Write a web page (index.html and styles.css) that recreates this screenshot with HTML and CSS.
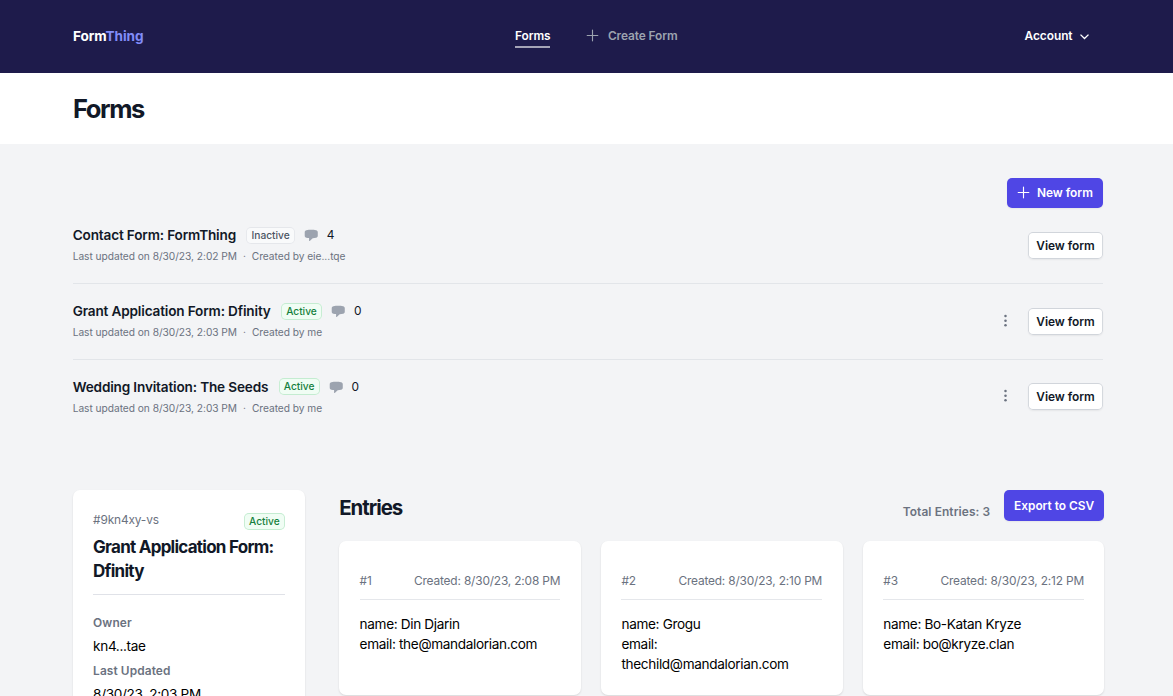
FILE: index.html
```html
<!DOCTYPE html>
<html lang="en">
<head>
<meta charset="utf-8">
<title>FormThing</title>
<link rel="stylesheet" href="styles.css">
</head>
<body>
<header class="topbar">
  <div class="logo">Form<span>Thing</span></div>
  <nav class="nav">
    <a class="nav-link active">Forms</a>
    <a class="nav-link"><svg class="icon" viewBox="0 0 24 24"><path d="M12 4.5v15m7.5-7.5h-15"/></svg>Create Form</a>
  </nav>
  <div class="account">Account<svg class="chevron" viewBox="0 0 20 20"><path d="M5.3 7.8 10 12.4l4.7-4.6"/></svg></div>
</header>
<div class="page-head"><h1>Forms</h1></div>
<main>
  <section class="forms">
    <div class="toolbar"><button class="btn primary"><svg class="icon" viewBox="0 0 24 24"><path d="M12 4.5v15m7.5-7.5h-15"/></svg>New form</button></div>
    <ul class="list">
      <li class="row">
        <div>
          <div class="row-title"><h2>Contact Form: FormThing</h2><span class="badge inactive">Inactive</span><svg class="chat" viewBox="0 0 20 20"><path d="M10 2.5c-2.3 0-4.5.2-6.7.5C1.9 3.2 1 4.4 1 5.8v4.9c0 1.4.9 2.6 2.3 2.8 1.2.2 2.5.3 3.7.4v3.3c0 .7.8 1 1.3.5l3.7-3.7c1.6 0 3.2-.2 4.7-.5 1.4-.2 2.3-1.4 2.3-2.8V5.8c0-1.4-.9-2.6-2.3-2.8-2.2-.3-4.4-.5-6.7-.5Z"/></svg><span class="count">4</span></div>
          <p class="meta">Last updated on 8/30/23, 2:02 PM<i>·</i>Created by eie...tqe</p>
        </div>
        <div class="actions"><button class="btn">View form</button></div>
      </li>
      <li class="row">
        <div>
          <div class="row-title"><h2>Grant Application Form: Dfinity</h2><span class="badge">Active</span><svg class="chat" viewBox="0 0 20 20"><path d="M10 2.5c-2.3 0-4.5.2-6.7.5C1.9 3.2 1 4.4 1 5.8v4.9c0 1.4.9 2.6 2.3 2.8 1.2.2 2.5.3 3.7.4v3.3c0 .7.8 1 1.3.5l3.7-3.7c1.6 0 3.2-.2 4.7-.5 1.4-.2 2.3-1.4 2.3-2.8V5.8c0-1.4-.9-2.6-2.3-2.8-2.2-.3-4.4-.5-6.7-.5Z"/></svg><span class="count">0</span></div>
          <p class="meta">Last updated on 8/30/23, 2:03 PM<i>·</i>Created by me</p>
        </div>
        <div class="actions"><svg class="dots" viewBox="0 0 20 20"><circle cx="10" cy="3.5" r="1.5"/><circle cx="10" cy="9" r="1.5"/><circle cx="10" cy="14.5" r="1.5"/></svg><button class="btn">View form</button></div>
      </li>
      <li class="row">
        <div>
          <div class="row-title"><h2>Wedding Invitation: The Seeds</h2><span class="badge">Active</span><svg class="chat" viewBox="0 0 20 20"><path d="M10 2.5c-2.3 0-4.5.2-6.7.5C1.9 3.2 1 4.4 1 5.8v4.9c0 1.4.9 2.6 2.3 2.8 1.2.2 2.5.3 3.7.4v3.3c0 .7.8 1 1.3.5l3.7-3.7c1.6 0 3.2-.2 4.7-.5 1.4-.2 2.3-1.4 2.3-2.8V5.8c0-1.4-.9-2.6-2.3-2.8-2.2-.3-4.4-.5-6.7-.5Z"/></svg><span class="count">0</span></div>
          <p class="meta">Last updated on 8/30/23, 2:03 PM<i>·</i>Created by me</p>
        </div>
        <div class="actions"><svg class="dots" viewBox="0 0 20 20"><circle cx="10" cy="3.5" r="1.5"/><circle cx="10" cy="9" r="1.5"/><circle cx="10" cy="14.5" r="1.5"/></svg><button class="btn">View form</button></div>
      </li>
    </ul>
  </section>
  <section class="detail">
    <aside class="card summary">
      <div class="summary-top"><span>#9kn4xy-vs</span><span class="badge">Active</span></div>
      <h2>Grant Application Form: Dfinity</h2>
      <dl><dt>Owner</dt><dd>kn4...tae</dd><dt>Last Updated</dt><dd>8/30/23, 2:03 PM</dd></dl>
    </aside>
    <div class="entries">
      <div class="entries-head"><h2>Entries</h2><span class="total">Total Entries: 3</span><button class="btn primary">Export to CSV</button></div>
      <div class="grid">
        <article class="card entry"><div class="entry-top"><span>#1</span><span>Created: 8/30/23, 2:08 PM</span></div><p>name: Din Djarin</p><p>email: the@mandalorian.com</p></article>
        <article class="card entry"><div class="entry-top"><span>#2</span><span>Created: 8/30/23, 2:10 PM</span></div><p>name: Grogu</p><p>email:<br>thechild@mandalorian.com</p></article>
        <article class="card entry"><div class="entry-top"><span>#3</span><span>Created: 8/30/23, 2:12 PM</span></div><p>name: Bo-Katan Kryze</p><p>email: bo@kryze.clan</p></article>
      </div>
    </div>
  </section>
</main>
</body>
</html>
```
FILE: styles.css
```css
* { box-sizing: border-box; margin: 0; padding: 0; }
body {
  height: 696px;
  overflow: hidden;
  background: #f3f4f6;
  color: #000;
  font: 13.6px/20.4px Inter, "Liberation Sans", sans-serif;
}
.topbar {
  height: 72.6px;
  padding: 0 80.5px 0 73px;
  display: grid;
  grid-template-columns: 442px 1fr auto;
  align-items: center;
  background: #1e1b4b;
  color: #fff;
  font-weight: 600;
}
.logo { font-weight: 700; letter-spacing: -0.1px; }
.logo span { color: #818cf8; }
.nav { display: flex; gap: 34px; font-size: 11.9px; line-height: 17px; letter-spacing: -0.1px; }
.nav-link { display: flex; align-items: center; padding: 3px 0 2px; border-bottom: 2px solid transparent; color: #9ca3af; }
.nav-link.active { color: #fff; border-color: #a5a4b7; }
.icon { width: 17px; height: 17px; fill: none; stroke: currentColor; stroke-width: 1.6; stroke-linecap: round; }
.nav .icon { margin-right: 6.5px; }
.account { display: flex; align-items: center; font-size: 11.9px; gap: 3px; letter-spacing: -0.05px; }
.chevron { width: 17px; height: 17px; fill: none; stroke: currentColor; stroke-width: 1.6; }
.page-head { height: 71.4px; padding: 2px 73px 0; display: flex; align-items: center; background: #fff; }
h1, h2 { color: #111827; }
h1 { font-size: 25.5px; line-height: 30px; letter-spacing: -1.4px; }
main { height: 552px; overflow: hidden; padding: 34px 68.6px 0 72.7px; }
.forms { width: 1030.4px; }
.toolbar { display: flex; justify-content: flex-end; height: 29.8px; }
.btn {
  height: 27.2px;
  padding: 0 8.5px;
  display: flex;
  align-items: center;
  border: 0;
  border-radius: 5px;
  background: #fff;
  color: #111827;
  box-shadow: inset 0 0 0 0.9px #d1d5db, 0 1px 2px rgba(0, 0, 0, 0.06);
  font: 600 11.9px/17px Inter, sans-serif;
  white-space: nowrap;
}
.row .btn { letter-spacing: -0.05px; }
.btn.primary { height: 30.6px; padding: 0 10.2px; background: #4f46e5; color: #fff; box-shadow: 0 1px 2px rgba(0, 0, 0, 0.06); }
.toolbar .btn.primary { height: 30px; }
.btn .icon { margin: 0 5px 0 -2px; }
.list { list-style: none; }
.row { height: 75.4px; display: flex; justify-content: space-between; align-items: center; }
.row + .row { border-top: 1px solid #e2e5e9; }
.row-title { display: flex; align-items: center; height: 20.4px; }
.row-title h2 { font-size: 13.6px; font-weight: 600; margin-right: 10.4px; letter-spacing: -0.165px; }
.badge {
  height: 17px;
  padding: 0 5.1px;
  border-radius: 5px;
  background: #f0fdf4;
  color: #15803d;
  box-shadow: inset 0 0 0 0.9px #c4ecd1;
  font-size: 10.2px;
  font-weight: 500;
  line-height: 16.6px;
}
.badge.inactive { background: #f9fafb; color: #4b5563; box-shadow: inset 0 0 0 0.9px #e5e7eb; }
.chat { width: 14.5px; height: 14.5px; margin: 0 8px 0 9.5px; fill: #9ca3af; }
.count { font-size: 11.9px; color: #111827; }
.meta { margin-top: 2.6px; font-size: 10.2px; line-height: 17px; letter-spacing: -0.035px; color: #6b7280; }
.meta i { margin: 0 6px; font-style: normal; }
.actions { display: flex; align-items: center; gap: 13.6px; }
.dots { width: 17px; height: 17px; fill: #6b7280; }
.detail { display: grid; grid-template-columns: 232.5px 1fr; gap: 34px; margin-top: 56.4px; }
.card { background: #fff; border-radius: 7px; box-shadow: 0 1px 2px rgba(0, 0, 0, 0.12); }
.summary { height: 300px; padding: 20px 20.4px; letter-spacing: -0.34px; }
.summary-top { display: flex; justify-content: space-between; align-items: center; height: 20.4px; font-size: 11.9px; letter-spacing: -0.15px; color: #6b7280; }
.summary .badge { margin-top: 1px; letter-spacing: 0; }
.summary h2 { padding-bottom: 10px; margin-top: 5.6px; border-bottom: 1px solid #e0e2e8; font-size: 17px; line-height: 23.8px; letter-spacing: -0.75px; }
dl { margin-top: 18.5px; }
dt { color: #6b7280; font-size: 11.9px; font-weight: 600; line-height: 20.4px; letter-spacing: 0.1px; }
dd { margin: 2px 0 5px; }
.entries-head { display: flex; align-items: flex-start; height: 51px; }
.entries-head h2 { flex: 1; font-size: 20.4px; line-height: 35px; letter-spacing: -1px; }
.total { margin: 13px 13.6px 0 0; font-size: 11.9px; font-weight: 600; line-height: 17px; letter-spacing: 0.1px; color: #6b7280; }
.grid { display: grid; grid-template-columns: repeat(3, minmax(0, 1fr)); gap: 20.4px; }
.entry { height: 153.5px; padding: 30.4px 20.4px 0; letter-spacing: -0.34px; }
.entry-top { display: flex; justify-content: space-between; padding-bottom: 10.2px; margin-bottom: 13.6px; border-bottom: 1px solid #e5e7eb; color: #6b7280; font-size: 11.9px; line-height: 17px; letter-spacing: -0.17px; }
```
